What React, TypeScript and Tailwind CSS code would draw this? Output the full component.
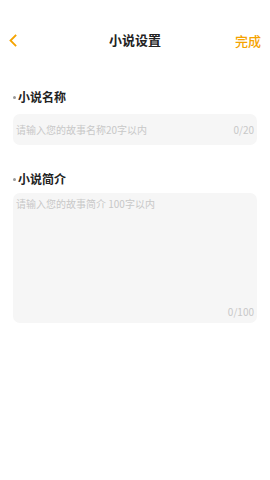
import React, { useState } from 'react';

const font = { fontFamily: '"Noto Sans CJK SC", "Noto Sans", sans-serif' };

function Label({ text }: { text: string }) {
  return (
    <div className="flex items-center h-[18px] pl-[13px]">
      <span className="w-[3px] h-[3px] rounded-full bg-[#999] mr-[2px]"></span>
      <span className="text-[12px] font-bold text-[#222] leading-none">{text}</span>
    </div>
  );
}

export default function App() {
  const [name, setName] = useState('');
  const [intro, setIntro] = useState('');

  return (
    <div className="w-[270px] h-[480px] bg-white" style={font}>
      <div className="h-[28px]"></div>
      <div className="relative flex items-center justify-center h-[24px]">
        <svg className="absolute left-[8px] top-[6px]" width="10" height="13" viewBox="0 0 10 13">
          <path d="M7.5 1.5 L2.5 6.5 L7.5 11.5" fill="none" stroke="#f5a300" strokeWidth="1.8" strokeLinecap="square" />
        </svg>
        <span className="text-[13px] font-bold text-[#222]">小说设置</span>
        <span className="absolute right-[9px] top-[3px] text-[13px] font-medium text-[#f5a300]">完成</span>
      </div>

      <div className="mt-[36px]">
        <Label text="小说名称" />
        <div className="mt-[8px] mx-[13px] h-[31px] rounded-[7px] bg-[#f6f6f6] flex items-center px-[3px]">
          <input
            value={name}
            onChange={(e) => setName(e.target.value)}
            maxLength={20}
            placeholder="请输入您的故事名称20字以内"
            className="flex-1 min-w-0 bg-transparent outline-none text-[10px] text-[#333] placeholder:text-[#c8c8c8]"
          />
          <span className="text-[10px] text-[#c8c8c8]">{name.length}/20</span>
        </div>
      </div>

      <div className="mt-[25px]">
        <Label text="小说简介" />
        <div className="relative mt-[5px] mx-[13px] h-[130px] rounded-[7px] bg-[#f6f6f6] px-[3px] pt-[4px]">
          <textarea
            value={intro}
            onChange={(e) => setIntro(e.target.value)}
            maxLength={100}
            placeholder="请输入您的故事简介 100字以内"
            className="w-full h-[100px] resize-none bg-transparent outline-none text-[10px] leading-[14px] text-[#333] placeholder:text-[#c8c8c8]"
          />
          <span className="absolute right-[3px] bottom-[4px] text-[10px] text-[#c8c8c8]">{intro.length}/100</span>
        </div>
      </div>
    </div>
  );
}
